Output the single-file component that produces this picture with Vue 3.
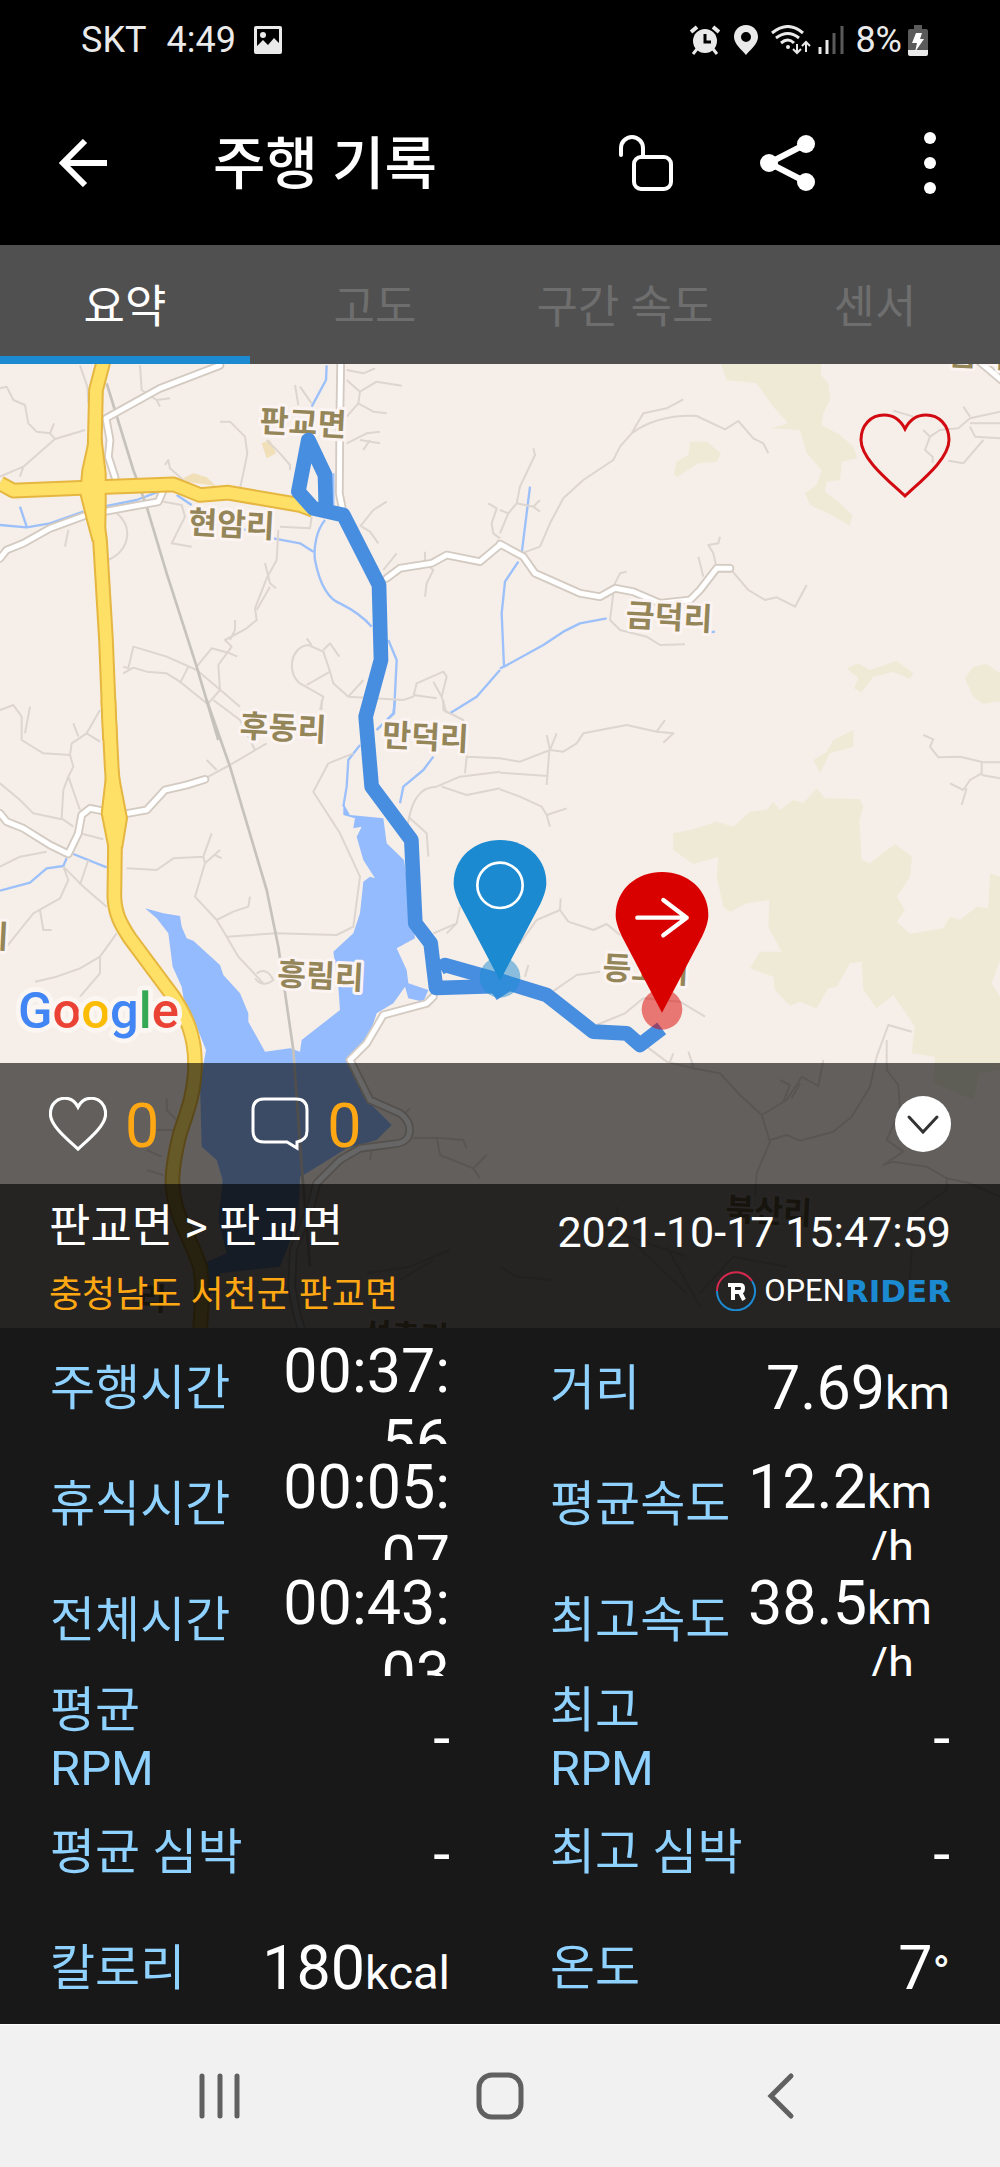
<template>
  <div class="phone">
    <!-- 상태 표시줄 -->
    <div class="status">
      <div class="status-side">
        <span class="carrier">SKT</span>
        <span class="clock">4:49</span>
        <svg width="28" height="28" viewBox="0 0 28 28">
          <path fill="#eaeaea" fill-rule="evenodd" d="M2 0H26Q28 0 28 2V26Q28 28 26 28H2Q0 28 0 26V2Q0 0 2 0ZM3 3V20L9 14L14 19L20 12L25 17V3Z" />
          <circle cx="9" cy="9" r="3" fill="#eaeaea" />
        </svg>
      </div>
      <div class="status-side right">
        <svg width="30" height="30" viewBox="0 0 30 30">
          <g stroke="#eaeaea" stroke-width="4">
            <path d="M1 7L7 2M29 7L23 2" />
            <path stroke-width="3" d="M7 24L3 29M23 24L27 29" />
          </g>
          <circle cx="15" cy="16" r="12" fill="#eaeaea" />
          <path d="M15 9V17H21" fill="none" stroke="#000" stroke-width="3" />
        </svg>
        <svg class="pin-icon" width="24" height="30" viewBox="0 0 24 30">
          <path fill="#eaeaea" fill-rule="evenodd" d="M12 0C19 0 24 5 24 12C24 19 16 25 12 30C8 25 0 19 0 12C0 5 5 0 12 0ZM12 7A5 5 0 0 0 12 17A5 5 0 0 0 12 7Z" />
        </svg>
        <svg class="wifi-icon" width="40" height="30" viewBox="0 0 40 30">
          <g fill="none" stroke="#eaeaea" stroke-width="3">
            <path d="M1 8Q17 -5 32 8M5 13Q17 4 28 13M10 18Q17 12 23 18" />
            <path stroke-width="2" d="M26 19V27M22 24L26 28L30 24M35 27V18M31 21L35 17L39 21" />
          </g>
          <circle cx="17" cy="22" r="2" fill="#eaeaea" />
        </svg>
        <svg class="signal-icon" width="26" height="28" viewBox="0 0 26 28">
          <path stroke="#eaeaea" stroke-width="3" d="M2 21V28M9 14V28" />
          <path stroke="#5a5a5a" stroke-width="3" d="M16 7V28M24 0V28" />
        </svg>
        <span class="percent">8%</span>
        <svg class="battery-icon" width="20" height="31" viewBox="0 0 20 31">
          <path fill="#5a5a5a" d="M6 0H14V4H18Q20 4 20 6V25H0V6Q0 4 2 4H6Z" />
          <path fill="#eaeaea" d="M0 25H20V29Q20 31 18 31H2Q0 31 0 29Z" />
          <path fill="#fff" d="M8 8H14L12 14H16L7 27L9 18H4Z" />
        </svg>
      </div>
    </div>

    <header class="app-bar">
      <button class="icon-btn back" aria-label="뒤로">
        <svg width="48" height="48" viewBox="0 0 48 48" fill="none" stroke="#fff" stroke-width="6">
          <path d="M48 24H5M26 2L4 24L26 46" />
        </svg>
      </button>
      <h1>주행 기록</h1>
      <button class="icon-btn" aria-label="잠금">
        <svg width="56" height="58" viewBox="0 0 56 58" fill="none" stroke="#fff" stroke-width="4" stroke-linecap="round">
          <path d="M3 21V14A11 11 0 0 1 25 14V22" />
          <rect x="16" y="23" width="37" height="32" rx="7" />
        </svg>
      </button>
      <button class="icon-btn" aria-label="공유">
        <svg width="56" height="58" viewBox="0 0 56 58" fill="#fff">
          <path d="M46 10L9 29L46 48" fill="none" stroke="#fff" stroke-width="6" />
          <circle cx="46" cy="10" r="9" />
          <circle cx="9" cy="29" r="9" />
          <circle cx="46" cy="48" r="9" />
        </svg>
      </button>
      <button class="icon-btn" aria-label="더보기">
        <svg width="56" height="62" viewBox="0 0 56 62" fill="#fff">
          <circle cx="28" cy="6" r="6" />
          <circle cx="28" cy="31" r="6" />
          <circle cx="28" cy="56" r="6" />
        </svg>
      </button>
    </header>

    <nav class="tabs">
      <button
        v-for="(tab, i) in tabs"
        :key="tab"
        class="tab"
        :class="{ active: i === activeTab }"
        @click="activeTab = i"
      >{{ tab }}</button>
    </nav>

    <!-- 지도 -->
    <section class="map">
      <svg class="map-canvas" viewBox="0 0 3000 2892" preserveAspectRatio="xMidYMin slice">
        <rect width="3000" height="2892" fill="#f6eee8" />
        <g v-for="layer in layers" :key="layer.name" :class="layer.name">
          <path v-for="(p, i) in layer.paths" :key="i" :d="p.d" :transform="tiles[p.tile]" />
        </g>
        <text
          v-for="place in places"
          :key="place.x"
          class="place"
          :transform="`translate(${place.x} ${place.y}) rotate(3)`"
        >{{ place.name }}</text>

        <path class="route" d="M978 445L975 333L925 228L895 383L940 433L1030 453L1137 663L1143 888L1097 1058L1115 1268L1234 1428L1246 1678L1292 1738L1308 1872L1500 1866" />
        <path class="route" d="M1320 1812L1335 1803L1500 1850L1640 1893L1780 2003L1880 2008L1920 2043L1985 1993" />
        <path class="route" d="M1478 1890L1520 1862" />

        <g transform="translate(1500 1850)">
          <circle cy="-10" r="61" fill="#1b8ad1" opacity=".5" />
          <path :d="pin" fill="#1b8ad1" />
          <circle cy="-286" r="68" fill="none" stroke="#fff" stroke-width="8" />
        </g>
        <g transform="translate(1986 1946)">
          <circle cy="-10" r="61" fill="#d90000" opacity=".5" />
          <path :d="pin" fill="#d90000" />
          <path d="M-74 -285H74M4 -338L74 -285L4 -232" fill="none" stroke="#fff" stroke-width="13" stroke-linecap="round" stroke-linejoin="round" />
        </g>

        <text class="google" x="54" y="1992">
          <tspan fill="#4285f4">G</tspan><tspan fill="#ea4335">o</tspan><tspan fill="#fbbc05">o</tspan><tspan fill="#4285f4">g</tspan><tspan fill="#34a853">l</tspan><tspan fill="#ea4335">e</tspan>
        </text>
      </svg>

      <div class="map-view">
        <button class="icon-btn" aria-label="좋아요">
          <svg width="92" height="86" viewBox="0 0 92 86">
            <path :d="heart" fill="none" stroke="#d20a11" stroke-width="3" />
          </svg>
        </button>
      </div>

      <div class="social">
        <button class="count">
          <svg width="58" height="54" viewBox="0 0 92 86">
            <path :d="heart" fill="none" stroke="#fff" stroke-width="5" />
          </svg>
          <span>0</span>
        </button>
        <button class="count">
          <svg width="58" height="54" viewBox="0 0 58 54" fill="none" stroke="#fff" stroke-width="3">
            <path d="M13 2H45Q56 2 56 13V34Q56 43 46 45V51L36 45H13Q2 45 2 34V13Q2 2 13 2Z" />
          </svg>
          <span>0</span>
        </button>
        <button class="expand" aria-label="펼치기">
          <svg width="56" height="56" viewBox="0 0 56 56" fill="none" stroke="#333" stroke-width="3" stroke-linecap="round">
            <path d="M14 21L28 36L42 21" />
          </svg>
        </button>
      </div>

      <div class="info">
        <div class="course">
          <strong>판교면 &gt; 판교면</strong>
          <span class="region">충청남도 서천군 판교면</span>
        </div>
        <div class="when">
          <time datetime="2021-10-17T15:47:59">2021-10-17 15:47:59</time>
          <div class="brand">
            <svg width="40" height="40" viewBox="0 0 40 40" fill="none" stroke-width="2">
              <path d="M1 20A19 19 0 0 1 36 10" stroke="#d5294d" />
              <path d="M36 10A19 19 0 1 1 1 20" stroke="#1b8ad1" />
              <path d="M12 14H24Q27 14 27 17Q27 21 24 21H19M24 21L28 29M17 14V29" stroke="#fff" stroke-width="4" />
            </svg>
            <span class="open">OPEN</span><span class="rider">RIDER</span>
          </div>
        </div>
      </div>
    </section>

    <!-- 주행 통계 -->
    <dl class="stats">
      <div v-for="stat in stats" :key="stat.label" class="stat">
        <dt>{{ stat.label }}</dt>
        <dd>
          <div class="line">{{ stat.value }}<small v-if="stat.unit">{{ stat.unit }}</small></div>
          <div v-if="stat.rest" class="line">{{ stat.rest }}</div>
          <small v-if="stat.per" class="per">{{ stat.per }}</small>
        </dd>
      </div>
    </dl>

    <nav class="system-nav">
      <button class="icon-btn" aria-label="최근 앱">
        <svg width="48" height="48" viewBox="0 0 48 48" fill="none" stroke="#606060" stroke-width="5" stroke-linecap="round">
          <path d="M6 4V44M24 4V44M41 4V44" />
        </svg>
      </button>
      <button class="icon-btn" aria-label="홈">
        <svg width="48" height="48" viewBox="0 0 48 48" fill="none" stroke="#606060" stroke-width="5">
          <rect x="3" y="3" width="42" height="42" rx="13" />
        </svg>
      </button>
      <button class="icon-btn" aria-label="이전">
        <svg width="48" height="48" viewBox="0 0 48 48" fill="none" stroke="#606060" stroke-width="5" stroke-linecap="round">
          <path d="M35 4L15 24L35 44" />
        </svg>
      </button>
    </nav>
  </div>
</template>

<script setup>
import { ref } from 'vue';

const tabs = ['요약', '고도', '구간 속도', '센서'];
const activeTab = ref(0);

const stats = [
  { label: '주행시간', value: '00:37:', rest: '56' },
  { label: '거리', value: '7.69', unit: 'km' },
  { label: '휴식시간', value: '00:05:', rest: '07' },
  { label: '평균속도', value: '12.2', unit: 'km', per: '/h' },
  { label: '전체시간', value: '00:43:', rest: '03' },
  { label: '최고속도', value: '38.5', unit: 'km', per: '/h' },
  { label: '평균 RPM', value: '-' },
  { label: '최고 RPM', value: '-' },
  { label: '평균 심박', value: '-' },
  { label: '최고 심박', value: '-' },
  { label: '칼로리', value: '180', unit: 'kcal' },
  { label: '온도', value: '7', unit: '°' },
];

const heart = 'M46 83C30 68 2 46 2 27C2 12 12 2 25 2C35 2 42 8 46 16C50 8 57 2 67 2C80 2 90 12 90 27C90 46 62 68 46 83Z';
const pin = 'M0 0L-121 -230C-132 -254 -139 -274 -139 -293C-139 -370 -75 -422 0 -422C75 -422 139 -370 139 -293C139 -274 132 -254 121 -230Z';

// 지도 타일의 위치
const tiles = {
  nw: 'translate(0 -372)',
  ne: 'translate(1500 -372)',
  w: 'translate(0 1008)',
  e: 'translate(1500 1008)',
  sw: 'translate(0 2088)',
  se: 'translate(1500 2088)',
};

const whiteRoads = [
  { tile: 'nw', d: 'M0 955L20 930L70 910L150 865L260 825M310 815L475 785L490 750M660 376L480 445L318 535L330 600L325 650L345 712M1022 376L1020 500L1018 760L1026 800M1160 1015L1200 985L1295 970L1340 945L1440 965L1500 915' },
  { tile: 'ne', d: 'M0 912L70 950L105 1000L240 1060L300 1070L345 1045L400 1055L480 1090L570 1080L600 1050L650 985L690 985M1440 366L1510 425' },
  { tile: 'w', d: 'M0 340L20 365L70 385L150 435L205 462L235 400L245 345L270 325L310 333M385 340L440 330L495 270L560 255L615 238M1300 890L1280 910L1150 945L1100 1030L1050 1080L1110 1200L1200 1240Q1240 1270 1225 1310Q1215 1330 1180 1332L1080 1345L1020 1380L950 1450L935 1510L880 1650L875 1760L890 1840L905 1890' },
];

const yellowRoads = [
  { tile: 'nw', d: 'M310 366L288 450L284 620L278 750L300 900L318 1200L330 1500M0 730L40 752L280 742L520 733L600 765L685 758L900 795L940 810' },
  { tile: 'w', d: 'M325 0L335 200L345 340L345 430L343 590C345 640 360 670 390 715L520 890C560 950 585 1010 585 1090C585 1180 560 1240 540 1300C520 1380 515 1420 518 1460C525 1550 570 1610 600 1700C610 1760 605 1820 600 1890' },
];

const junctions = [
  { tile: 'nw', d: 'M270 600L250 690L244 760L264 840L280 900H312L314 800L314 700L302 600Z' },
  { tile: 'w', d: 'M322 220L308 340L328 440H364L378 355L352 220Z' },
];

const layers = [
  {
    name: 'forest',
    paths: [
      { tile: 'ne', d: 'M660 366L680 420L770 430L820 500L865 550L815 565L900 570L920 640L965 690L950 735L915 760L930 795L985 820L1050 857L1057 825L1020 790L975 755L980 725L1020 720L1025 665L1072 655L1060 620L1020 585L965 555L970 520L990 480L985 430L963 405V366Z' },
      { tile: 'ne', d: 'M570 605L620 605L663 640L650 665L595 670L530 712L522 700L530 665L565 645ZM1040 1285L1075 1270L1110 1290L1190 1262L1240 1300L1230 1317L1180 1295L1120 1310L1085 1357L1062 1345L1075 1315ZM1395 1315L1420 1280L1460 1272L1500 1300V1380L1450 1392L1420 1370Z' },
      { tile: 'e', d: 'M520 400L580 388L650 365L700 380L750 335L800 330L820 305L840 330L880 300L910 310L950 265L975 295L1080 298L1090 320L1078 360L1085 480L1110 490L1185 432L1236 470L1230 530L1190 590L1215 630L1190 665L1230 702L1330 685L1350 650L1380 660L1430 620L1465 625L1470 520L1500 530V780L1475 850L1500 890V1110L1440 1120L1420 1200L1300 1150L1305 1070L1235 1060L1245 980L1180 885L1130 925L1090 870L1085 785L1050 790L1010 860L985 865L950 925L900 905L870 917L825 870L820 830L750 805L780 755L845 755L805 680L808 600L740 610L690 635L670 620L650 530L655 470L580 492L520 450Z' },
      { tile: 'e', d: 'M940 180L980 155L1000 120L1060 90V140L990 160L960 218ZM1430 0H1500V5L1450 10Z' },
    ],
  },
  {
    name: 'park',
    paths: [{ tile: 'nw', d: 'M785 610L810 600L828 640L800 655ZM550 715L580 700L620 712L648 738L560 725Z' }],
  },
  {
    name: 'stream',
    paths: [
      { tile: 'nw', d: 'M980 376L978 420L935 500M0 855L80 862L150 850L250 815M310 800L410 780L470 757M530 765L575 795M60 800L80 860M670 855L740 870M820 895L900 910L940 935M975 840C950 870 940 920 945 960C960 1040 990 1080 1020 1090C1060 1110 1090 1130 1115 1160M1165 1200L1190 1260L1182 1420L1130 1470M1000 700V800M1500 1290L1430 1370L1350 1420' },
      { tile: 'ne', d: 'M90 740L65 940M55 965L15 1025L5 1120L12 1280L0 1285M12 1280L130 1215L190 1175L240 1150L320 1135M630 1177L645 1175' },
      { tile: 'w', d: 'M1080 135L1045 180L1040 260L1030 320M1300 170L1270 210L1210 260L1200 310M0 572L90 548L140 505L190 498L200 475M220 462L320 502M1130 90L1180 40L1185 0' },
    ],
  },
  {
    name: 'lane',
    paths: [
      { tile: 'nw', d: 'M0 445L20 440L40 480L75 495L85 550L110 575L150 580L165 597L255 570M165 597L70 680L0 710M150 580L162 550M70 680L60 710M240 376L262 440L265 490M420 376L425 450L470 480L510 475M470 480L480 500M660 545L690 545L735 590L742 640L730 700L720 745' },
      { tile: 'nw', d: 'M1040 390L1090 400L1125 385M1040 420L1080 455L1130 425L1205 437M1080 455L1075 490L1040 530M1075 490L1120 515L1160 520M1040 610L1100 580L1140 575M1080 600L1140 610M1090 630L1110 600M885 435L895 495M900 440L935 490M800 600L840 640L870 675V690M495 675L505 660L510 685L550 720' },
      { tile: 'nw', d: 'M490 785L545 795L555 830L515 910L575 920M350 820C400 860 390 930 325 960M205 870L195 920M835 870L830 960L800 1015L765 1105L770 1140L740 1165L675 1200L695 1220L655 1275L660 1350L625 1390M795 970L810 1030L828 1045M810 1040L770 1110M705 1140V1170L690 1200M840 860L930 865L935 830' },
      { tile: 'nw', d: 'M370 1280L385 1285L400 1220L500 1250L590 1290L650 1340L720 1400M370 1300L400 1283L440 1295L500 1300L540 1325L620 1390M565 1280L540 1330M590 1280L635 1225L690 1240L712 1250M920 1335L990 1295L970 1235L925 1215C870 1220 860 1300 900 1330L970 1370L960 1410' },
      { tile: 'nw', d: 'M970 1230L990 1210L1018 1250M920 1195L935 1215M990 1295L1000 1330L1045 1370L1090 1320M1045 1370L1210 1380L1240 1370L1250 1330L1330 1295L1340 1310L1325 1370L1340 1420M1240 1365L1310 1375M1300 1325L1325 1370M1080 860L1120 810L1160 785M1085 860L1110 875L1135 910M1150 990L1190 940M1275 935V970L1300 990L1280 1030L1275 1070M1465 790L1490 805L1475 850L1480 880L1500 895' },
      { tile: 'ne', d: 'M65 940L120 920L150 850L190 775L250 720L340 660L360 620L395 580L430 520L500 505L550 478M395 580C450 540 520 525 590 528L675 568L715 543L760 595L790 610L805 640M100 625L105 645L60 740L50 790L25 820L0 880M0 810L25 820M50 790L100 800L120 780M100 800L120 815' },
      { tile: 'ne', d: 'M690 985L745 1050L795 1080L830 1072L885 1100L920 1035M650 985L640 940L625 915L655 910L660 890M610 1010L595 950M340 1040L360 1000L380 995M340 1060L330 1140L360 1170L440 1190L480 1215L555 1213M1180 512L1240 530M1270 570L1290 590L1275 630L1298 650V668M1290 590L1320 570L1375 565L1410 535L1500 515M1410 550L1500 550M1410 560L1425 590L1500 595M1450 600L1390 670L1345 662M1390 500L1410 530' },
      { tile: 'w', d: 'M0 30L40 15L65 50V120L130 160L210 165L215 130L260 100L300 30M90 20L75 100M220 70L235 110M260 100L300 125M210 165L220 200L205 230L190 270L185 355L220 380M205 230L240 330M0 250L60 300L100 340L185 358M0 500L60 470L140 455M190 500L205 540L180 595L100 640L60 690L20 740M190 500L250 560L320 620M265 480L240 555M240 400L310 418M120 630L130 690L155 690' },
      { tile: 'w', d: 'M380 505L470 510L520 475L610 470L635 400M610 470L615 490L585 590L650 660L680 710L830 700L1010 705L1060 680L1080 530L1020 400L940 275L985 190L1060 160M615 490L660 450M645 465L665 475M650 660L700 635L745 620L750 590M680 710L715 770L790 850M770 820Q800 800 820 840Q790 865 765 835M615 235L690 195L800 130M620 180L650 210M640 0L720 60L765 150M965 0V30' },
      { tile: 'w', d: 'M350 700L300 770V820L240 890M300 770L240 805L170 830L105 845M1220 400C1230 300 1260 260 1310 260L1380 230L1500 215M1325 260L1400 285L1500 265M1225 350L1280 400L1285 470M1330 0V30L1390 60L1400 170L1500 175M1400 170L1395 220M1300 700L1370 670L1380 620M1370 670L1340 700' },
      { tile: 'e', d: 'M0 175L60 185L150 150L190 155L230 130L250 100L380 75L470 95L520 100L490 128M470 95L495 60M150 150L140 105M150 150L170 100M0 218L142 228M148 150L140 255M0 268L60 290L125 320L140 345L200 325M140 345L150 380M60 730L110 660L180 630L205 665L280 690L320 672L360 705M180 630L182 595M150 880L230 825L300 815M75 830L85 795' },
      { tile: 'e', d: 'M290 975L375 940L430 895L540 905L615 950M440 1040L500 1085L580 1105L660 1120L720 1185L785 1245L810 1325L770 1420L765 1490M785 1245L860 1200L905 1130L955 1158L970 1080M840 1140L870 1155L850 1205M875 1195L900 1150M580 1100L565 1055M510 1085L520 1060' },
      { tile: 'e', d: 'M810 1320L860 1305L900 1322L1000 1295L1055 1250L1110 1160L1130 1070L1165 975L1235 995M1160 1020V1110L1195 1155L1200 1230L1160 1320L1210 1355L1150 1395L1180 1385L1280 1400L1340 1435L1410 1450L1500 1490M1270 105L1300 118L1290 140L1315 172L1380 170L1450 187H1500M1445 187V220L1410 240L1390 270L1350 250M1445 225L1500 235M1400 265L1385 315' },
      { tile: 'sw', d: 'M440 330L490 345M500 115V150L540 190M440 270L485 290M470 210H520M1240 235L1310 233L1390 240L1400 265M1310 233L1320 285L1420 325L1440 355M1420 325L1460 285M1110 300L1115 270M1210 165L1230 145M1100 640L1230 620L1350 570M1200 660L1300 600' },
      { tile: 'se', d: 'M350 500L560 700M0 620L50 650L160 660M500 560L600 740M350 440L360 520L560 590M1340 350V390L1240 460L1230 660M600 700L700 590L860 620' },
    ],
  },
  {
    name: 'lake',
    paths: [
      { tile: 'w', d: 'M435 625L490 640L540 648L545 680L560 715L580 722L660 795L670 825L720 880L745 940V965L795 1055L870 1045L900 1055L905 1020L1020 930L1015 860L1000 755L1060 700L1080 640L1090 545L1110 530L1125 535L1090 480L1070 410L1085 380L1060 385L1065 355L1030 345V310L1050 345L1150 355L1160 430L1212 480L1230 600L1245 715L1190 745L1220 810L1225 850L1285 870L1270 905L1225 895L1215 860L1180 910L1130 940L1100 1030L1045 1080L1080 1150L1110 1210L1175 1275L1130 1320L1040 1345L920 1420L900 1430L895 1560L840 1700L660 1720L650 1780H620L610 1690L680 1660L655 1560L668 1440L650 1380L605 1340L600 1150L618 1050L590 980L555 920L545 860L518 800L505 700L470 655Z' },
    ],
  },
  {
    name: 'rail',
    paths: [
      { tile: 'nw', d: 'M320 430L400 690L440 800L500 1000L590 1280L655 1500' },
      { tile: 'w', d: 'M620 0L690 200L800 570L835 740L880 1050L905 1400L930 1700' },
    ],
  },
  { name: 'white-edge', paths: whiteRoads },
  { name: 'white-road', paths: whiteRoads },
  { name: 'yellow-edge', paths: yellowRoads },
  { name: 'junction-edge', paths: junctions },
  { name: 'yellow-road', paths: yellowRoads },
  { name: 'junction', paths: junctions },
];

const places = [
  { name: '판교면', x: 778, y: 203 },
  { name: '현암리', x: 563, y: 508 },
  { name: '금덕리', x: 1876, y: 786 },
  { name: '후동리', x: 718, y: 1118 },
  { name: '만덕리', x: 1145, y: 1146 },
  { name: '흥림리', x: 830, y: 1862 },
  { name: '등고리', x: 1806, y: 1844 },
  { name: '리', x: -62, y: 1748 },
  { name: '금덕', x: 2845, y: 2 },
  { name: '북산리', x: 2175, y: 2568 },
  { name: '석촌리', x: 1085, y: 2942 },
  { name: '리', x: 412, y: 2835 },
];
</script>

<style>
body {
  margin: 0;
  background: #181818;
}
</style>

<style scoped>
.phone {
  display: flex;
  flex-direction: column;
  min-height: 100vh;
  font-family: Roboto, "Noto Sans CJK KR", sans-serif;
  color: #fff;
}

button {
  padding: 0;
  border: 0;
  background: none;
  font: inherit;
  color: inherit;
}

svg {
  display: block;
}

/* 상태 표시줄 */
.status {
  display: flex;
  justify-content: space-between;
  height: 80px;
  padding: 0 72px 0 81px;
  background: #000;
  color: #eaeaea;
  font-size: 36px;
  line-height: 82px;
}

.status-side {
  display: flex;
  align-items: center;
}

.clock {
  margin: 0 18px 0 20px;
}

.pin-icon {
  margin-left: 14px;
}

.wifi-icon {
  margin-left: 13px;
}

.signal-icon {
  margin-left: 7px;
}

.percent {
  margin: 0 6px 0 11px;
}

.app-bar {
  display: flex;
  align-items: center;
  gap: 86px;
  height: 165px;
  padding: 0 42px 0 59px;
  background: #000;
}

.app-bar h1 {
  flex: 1;
  margin: 0 0 0 20px;
  padding-top: 5px;
  font-size: 57px;
  font-weight: 500;
  line-height: 80px;
}

.tabs {
  display: flex;
  height: 119px;
  background: #505050;
}

.tab {
  flex: 1;
  padding-bottom: 2px;
  border-top: 8px solid transparent;
  border-bottom: 8px solid transparent;
  color: #6e6e6e;
  font-size: 45px;
}

.tab.active {
  border-bottom-color: #1b8ad1;
  color: #fff;
}

/* 지도 */
.map {
  position: relative;
  overflow: hidden;
}

.map-canvas {
  position: absolute;
  top: 0;
  left: 0;
  width: 100%;
  height: 100%;
}

.forest {
  fill: #eeead6;
}

.park {
  fill: #f1dfb8;
}

.lake {
  fill: #94bbfd;
}

.stream,
.lane,
.rail,
.white-edge,
.white-road,
.yellow-edge,
.yellow-road,
.route {
  fill: none;
  stroke-linejoin: round;
}

.stream {
  stroke: #9cc0fa;
  stroke-width: 7;
}

.lane {
  stroke: #ddd5cf;
  stroke-width: 6;
}

.rail {
  stroke: #c6c2bc;
  stroke-width: 8;
}

.white-edge {
  stroke: #d3cac1;
  stroke-width: 26;
  stroke-linecap: round;
}

.white-road {
  stroke: #fff;
  stroke-width: 15;
  stroke-linecap: round;
}

.yellow-edge {
  stroke: #e5b640;
  stroke-width: 47;
}

.yellow-road {
  stroke: #fee067;
  stroke-width: 35;
}

.junction {
  fill: #fee067;
}

.junction-edge {
  fill: #e5b640;
  stroke: #e5b640;
  stroke-width: 12;
}

.route {
  stroke: #478ee0;
  stroke-width: 44;
}

.place {
  font-family: "Noto Sans CJK KR", sans-serif;
  font-size: 94px;
  font-weight: 700;
  fill: #95865a;
  stroke: #fbf4f2;
  stroke-width: 18px;
  stroke-linejoin: round;
  paint-order: stroke;
}

.google {
  font-family: Roboto, sans-serif;
  font-size: 152px;
  font-weight: 500;
  stroke: #fbf6f2;
  stroke-width: 28px;
  stroke-linejoin: round;
  paint-order: stroke;
}

.map-view {
  position: relative;
  display: flex;
  justify-content: flex-end;
  align-items: flex-start;
  box-sizing: border-box;
  min-height: 699px;
  padding: 49px;
}

.social {
  position: relative;
  display: flex;
  align-items: center;
  gap: 92px;
  height: 121px;
  padding: 0 49px;
  background: rgba(0, 0, 0, .6);
}

.count {
  display: flex;
  align-items: center;
  gap: 18px;
  color: #ffa813;
  font-size: 61px;
  line-height: 72px;
}

.count span {
  padding-top: 4px;
}

.expand {
  margin-left: auto;
  border-radius: 50%;
  background: #fff;
}

.info {
  position: relative;
  display: flex;
  justify-content: space-between;
  height: 144px;
  padding: 0 49px;
  background: rgba(0, 0, 0, .85);
}

.course,
.when {
  display: flex;
  flex-direction: column;
}

.course {
  padding-top: 9px;
}

.course strong {
  font-size: 45px;
  font-weight: 400;
  line-height: 68px;
}

.region {
  color: #ffa813;
  font-size: 36px;
  line-height: 68px;
}

.when {
  align-items: flex-end;
  padding-top: 16px;
}

.when time {
  font-size: 43px;
  line-height: 64px;
}

.brand {
  display: flex;
  align-items: center;
  font-size: 31px;
  line-height: 54px;
}

.open {
  margin-left: 8px;
}

.rider {
  color: #1b8ad1;
  font-family: "DejaVu Sans", sans-serif;
  font-size: 31px;
  font-weight: 700;
}

/* 주행 통계 */
.stats {
  display: grid;
  grid-template-columns: 1fr 1fr;
  margin: 0;
  background: #181818;
}

.stat {
  display: flex;
  box-sizing: border-box;
  height: 116px;
  padding: 0 50px;
  overflow: hidden;
}

.stat dt {
  display: flex;
  flex: 1;
  align-items: safe center;
  padding-top: 6px;
  color: #8fd1ff;
  font-size: 49px;
  line-height: 58px;
  word-break: keep-all;
}

.stat dd {
  display: flex;
  flex: 1;
  flex-direction: column;
  justify-content: safe center;
  align-items: flex-end;
  margin: 0;
  padding-top: 8px;
  font-size: 61px;
  line-height: 71px;
  white-space: nowrap;
}

.line {
  flex: none;
}

.stat small {
  font-size: 47px;
}

.line:has(+ .per) {
  margin-right: 18px;
}

.stat .per {
  margin-right: 36px;
  line-height: 42px;
}

.system-nav {
  display: flex;
  flex: 1;
  align-items: center;
  padding: 0 80px;
  min-height: 142px;
  border-top: 1px solid #fff;
  background: #f1f1f1;
}

.system-nav .icon-btn {
  display: flex;
  flex: 1;
  justify-content: center;
}
</style>
